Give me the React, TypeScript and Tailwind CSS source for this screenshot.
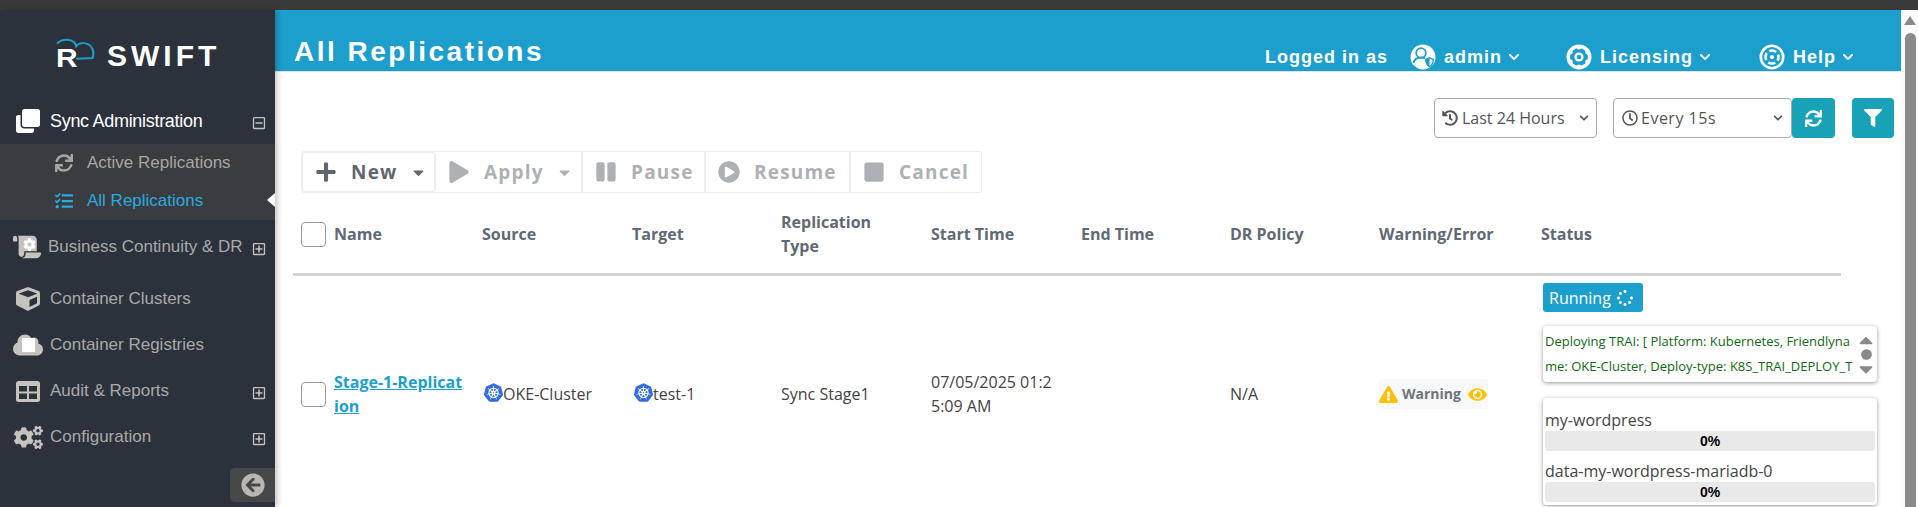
import { FaChevronDown, FaClone, FaCog, FaCogs, FaCube, FaCloud, FaEye, FaExclamationTriangle, FaFilter, FaHistory, FaPause, FaPlay, FaPlayCircle, FaPlus, FaRegClock, FaRegMinusSquare, FaRegPlusSquare, FaScroll, FaStop, FaSync, FaTasks, FaArrowCircleLeft, FaCaretDown, FaCaretUp, FaCircle, FaSpinner } from "react-icons/fa";
import { SiKubernetes } from "react-icons/si";

const columns = "grid grid-cols-[181px_150px_149px_150px_150px_149px_149px_162px_308px]";

function SideItem({ icon, label, toggle, indent }: { icon: React.ReactNode; label: string; toggle?: boolean; indent?: string }) {
  return (
    <div className="flex h-[46px] items-center text-[#a9a9a9]">
      <div className={`flex shrink-0 justify-center pl-[6px] text-[#c6c2be] ${indent ?? "w-[50px]"}`}>{icon}</div>
      <span className="flex-1 whitespace-nowrap">{label}</span>
      {toggle && <FaRegPlusSquare className="mr-[9px] mt-[3px] text-[14px] text-[#c6c2be]" />}
    </div>
  );
}

function TopLink({ icon, label }: { icon: React.ReactNode; label: string }) {
  return (
    <div className="flex items-center gap-[8px]">
      {icon}
      <span className="tracking-[1px]">{label}</span>
      <FaChevronDown className="-ml-[2px] text-[12px]" />
    </div>
  );
}

function ToolButton({ icon, label, caret, active, className }: { icon: React.ReactNode; label: string; caret?: boolean; active?: boolean; className: string }) {
  return (
    <div className={`flex items-center border-r-2 border-[#eeeeee] pl-[12px] last:border-r-0 ${active ? "text-[#5f6670]" : "text-[#adb1b4]"} ${className}`}>
      <span className="flex w-[36px] shrink-0 text-[22px]">{icon}</span>
      <span className="text-[19px] font-bold tracking-[1.2px]">{label}</span>
      {caret && <FaCaretDown className="ml-[12px] text-[17px]" />}
    </div>
  );
}

function Volume({ name }: { name: string }) {
  return (
    <div className="mb-[9px]">
      <div className="flex h-[22px] items-center text-[#444444]">{name}</div>
      <div className="flex h-[20px] items-center justify-center rounded-[3px] bg-[#e9e9e9] text-[14px] font-bold leading-none text-black [font-family:'Liberation_Sans',sans-serif]">
        0%
      </div>
    </div>
  );
}

export default function App() {
  return (
    <div className="flex h-screen flex-col overflow-hidden bg-white [font-family:'Open_Sans',sans-serif]">
      <div className="h-[10px] shrink-0 bg-[#3a3a3a]" />
      <div className="flex min-h-0 flex-1">
        {/* Sidebar */}
        <aside className="z-10 flex w-[275px] shrink-0 flex-col bg-[#2b323b] text-[17px] shadow-[2px_0_6px_rgba(0,0,0,0.25)] [font-family:'Liberation_Sans',sans-serif]">
          <div className="flex h-[90px] shrink-0 items-start pl-[56px] pt-[33px] text-white">
            <div className="relative flex items-end">
              <span className="mt-[4px] w-[51px] origin-left scale-x-[1.2] text-[25px] font-bold leading-[22px]">R</span>
              <svg viewBox="45 25 125 70" className="absolute -left-[1px] -top-[5px] h-[23px] w-[42px]" fill="none" stroke="#1d9fce" strokeWidth="6">
                <path d="M50 42 C62 28 88 26 102 38 C106 42 107 46 108 50 C114 40 132 38 144 44 C150 47 156 53 158 58 C161 68 161 78 158 86 L108 88" />
              </svg>
              <span className="text-[30px] font-bold leading-[26px] tracking-[4px]">SWIFT</span>
            </div>
          </div>
          <div className="flex h-[44px] shrink-0 items-center pb-[2px] text-white">
            <div className="flex w-[50px] shrink-0 justify-center pl-[6px] text-[24px]"><FaClone /></div>
            <span className="flex-1 whitespace-nowrap text-[18px] tracking-[-0.3px]">Sync Administration</span>
            <FaRegMinusSquare className="mr-[9px] mt-[3px] text-[14px] text-[#c6c2be]" />
          </div>
          <div className="shrink-0 bg-[#3a3d40]">
            <div className="flex h-[38px] items-center text-[#a9a5a1]">
              <div className="flex w-[87px] shrink-0 justify-center pl-[40px] text-[18px]"><FaSync /></div>
              <span>Active Replications</span>
            </div>
            <div className="relative flex h-[38px] items-center text-[#2ba8e0]">
              <div className="flex w-[87px] shrink-0 justify-center pl-[40px] text-[18px]"><FaTasks /></div>
              <span>All Replications</span>
              <div className="absolute right-0 top-[11px] h-0 w-0 border-y-[7px] border-r-[8px] border-y-transparent border-r-white" />
            </div>
          </div>
          <div className="mt-[4px]">
            <SideItem
              indent="w-[48px]"
              icon={
                <span className="relative flex text-[28px]">
                  <FaScroll />
                  <FaCog className="absolute left-[10px] top-[5px] text-[13px] text-white" />
                </span>
              }
              label="Business Continuity & DR"
              toggle
            />
          </div>
          <div className="mt-[6px]">
            <SideItem icon={<FaCube className="text-[24px]" />} label="Container Clusters" />
            <SideItem
              icon={
                <span className="relative flex text-[30px]">
                  <FaCloud />
                  <span className="absolute left-[9px] top-[8px] h-[14px] w-[13px] bg-white" />
                </span>
              }
              label="Container Registries"
            />
            <SideItem
              icon={
                <svg viewBox="0 0 24 21" className="h-[21px] w-[24px]">
                  <rect width="24" height="21" rx="2.500" fill="#c6c2be" />
                  <rect x="3" y="5" width="8" height="5.500" fill="#2b323b" />
                  <rect x="13" y="5" width="8" height="5.500" fill="#2b323b" />
                  <rect x="3" y="12.500" width="8" height="5.500" fill="#2b323b" />
                  <rect x="13" y="12.500" width="8" height="5.500" fill="#2b323b" />
                </svg>
              }
              label="Audit & Reports"
              toggle
            />
            <SideItem icon={<FaCogs className="text-[29px]" />} label="Configuration" toggle />
          </div>
          <div className="mb-[5px] mt-auto flex h-[34px] w-[45px] items-center justify-center self-end rounded-l-[5px] bg-[#454749] text-[24px] text-[#b9b5b1]">
            <FaArrowCircleLeft />
          </div>
        </aside>

        {/* Main */}
        <main className="flex min-w-0 flex-1 flex-col">
          <header className="flex h-[62px] shrink-0 items-end justify-between border-b border-[#dfe6ea] bg-[#1d9fce] pl-[19px] pr-[47px] font-bold text-white [font-family:'Liberation_Sans',sans-serif]">
            <h1 className="text-[28px] leading-[38px] tracking-[2.5px]">All Replications</h1>
            <div className="flex h-[28px] items-center text-[18px]">
              <span className="mr-[22px] tracking-[1px]">Logged in as</span>
              <div className="mr-[46px]">
                <TopLink
                  icon={
                    <svg viewBox="0 0 26 26" className="h-[26px] w-[26px]">
                      <circle cx="13" cy="13" r="12.500" fill="white" />
                      <circle cx="11" cy="9" r="4.800" fill="white" stroke="#1d9fce" strokeWidth="1.800" />
                      <path d="M3.500 19c.8-3.800 3.500-5.500 7.500-5.500 1.700 0 3 .3 4 .8" fill="none" stroke="#1d9fce" strokeWidth="1.800" />
                      <path d="M15 15l4.500-2 4.500 2c0 4-1.500 7-4.500 8.500-3-1.500-4.500-4.500-4.500-8.500z" fill="#1d9fce" />
                      <path d="M19.500 14.500l3 1.300c0 2.800-1 5-3 6.200z" fill="white" />
                    </svg>
                  }
                  label="admin"
                />
              </div>
              <div className="mr-[48px]">
                <TopLink
                  icon={
                    <svg viewBox="0 0 26 26" className="h-[26px] w-[26px]">
                      <circle cx="13" cy="13" r="12.500" fill="white" />
                      <circle cx="13" cy="13" r="9" fill="#1d9fce" />
                      <g fill="white">
                        <circle cx="13" cy="3.200" r="2.300" />
                        <circle cx="21.500" cy="8.100" r="2.300" />
                        <circle cx="21.500" cy="17.900" r="2.300" />
                        <circle cx="13" cy="22.800" r="2.300" />
                        <circle cx="4.500" cy="17.900" r="2.300" />
                        <circle cx="4.500" cy="8.100" r="2.300" />
                        <circle cx="13" cy="13" r="4.600" />
                      </g>
                      <circle cx="13" cy="13" r="2.200" fill="#1d9fce" />
                    </svg>
                  }
                  label="Licensing"
                />
              </div>
              <TopLink
                icon={
                  <svg viewBox="0 0 26 26" className="h-[26px] w-[26px]" fill="none" stroke="white">
                    <circle cx="13" cy="13" r="11.200" strokeWidth="2.600" />
                    <circle cx="13" cy="13" r="6.500" strokeWidth="2.600" strokeDasharray="7.200 3" strokeDashoffset="3.600" />
                    <circle cx="13" cy="13" r="2" fill="white" strokeWidth="0" />
                  </svg>
                }
                label="Help"
              />
            </div>
          </header>

          <div className="min-h-0 flex-1 pl-[18px] pr-[7px]">
            {/* Filters */}
            <div className="mt-[26px] flex h-[40px] justify-end text-[16px] text-[#555555]">
              <div className="flex w-[163px] items-center justify-between rounded-[4px] border border-[#aaaaaa] px-[7px]">
                <span className="flex items-center gap-[4px] whitespace-nowrap"><FaHistory className="text-[16px]" />Last 24 Hours</span>
                <FaChevronDown className="text-[10px]" />
              </div>
              <div className="ml-[16px] flex w-[179px] items-center justify-between rounded-[4px] border border-[#aaaaaa] px-[8px]">
                <span className="flex items-center gap-[3px] whitespace-nowrap tracking-[0.5px]"><FaRegClock className="text-[16px]" />Every 15s</span>
                <FaChevronDown className="text-[10px]" />
              </div>
              <div className="flex w-[43px] items-center justify-center rounded-[4px] bg-[#17a2b8] text-[17px] text-white"><FaSync /></div>
              <div className="ml-[17px] flex w-[42px] items-center justify-center rounded-[4px] bg-[#17a2b8] text-[18px] text-white"><FaFilter /></div>
            </div>

            {/* Toolbar */}
            <div className="ml-[8px] mt-[13px] flex h-[42px] w-[681px] rounded-[3px] border border-[#eeeeee]">
              <ToolButton className="w-[134px] rounded-[3px] border border-[#e4e4e4]" active icon={<FaPlus />} label="New" caret />
              <ToolButton className="w-[147px]" icon={<FaPlay />} label="Apply" caret />
              <ToolButton className="w-[123px]" icon={<FaPause />} label="Pause" />
              <ToolButton className="w-[145px]" icon={<FaPlayCircle />} label="Resume" />
              <ToolButton className="w-[130px]" icon={<FaStop />} label="Cancel" />
            </div>

            {/* Table */}
            <div className="mt-[12px] w-[1548px] text-[16px]">
              <div className={`${columns} h-[71px] items-center border-b-[3px] border-[#d2d2d2] pb-[10px] font-bold leading-[24px] text-[#5f6a75]`}>
                <div className="flex items-center pl-[8px]">
                  <div className="mr-[8px] h-[25px] w-[25px] rounded-[4px] border border-[#999999]" />
                  Name
                </div>
                <div className="pl-[8px]">Source</div>
                <div className="pl-[8px]">Target</div>
                <div className="pl-[8px]">Replication<br />Type</div>
                <div className="pl-[8px]">Start Time</div>
                <div className="pl-[8px]">End Time</div>
                <div className="pl-[8px]">DR Policy</div>
                <div className="pl-[8px]">Warning/Error</div>
                <div className="pl-[8px]">Status</div>
              </div>

              <div className={`${columns} items-center leading-[24px] text-[#444444]`}>
                <div className="flex items-center pl-[8px]">
                  <div className="mr-[8px] h-[25px] w-[25px] shrink-0 rounded-[4px] border border-[#999999]" />
                  <a className="w-[132px] break-all font-bold text-[#1d9fce] underline">Stage-1-Replication</a>
                </div>
                <div className="flex items-center pl-[10px]">
                  <SiKubernetes className="-mt-[3px] text-[19px] text-[#326ce5]" />OKE-Cluster
                </div>
                <div className="flex items-center pl-[10px]">
                  <SiKubernetes className="-mt-[3px] text-[19px] text-[#326ce5]" />test-1
                </div>
                <div className="pl-[8px]">Sync Stage1</div>
                <div className="break-all pl-[8px] pr-[18px]">07/05/2025 01:25:09 AM</div>
                <div />
                <div className="pl-[8px]">N/A</div>
                <div className="pl-[8px]">
                  <div className="flex h-[30px] w-[109px] items-center rounded-[3px] bg-[#f8f9fa] text-[14px] font-bold text-[#6c757d]">
                    <FaExclamationTriangle className="mr-[4px] text-[19px] text-[#ffc107]" />
                    Warning
                    <FaEye className="ml-[7px] text-[19px] text-[#ffc107]" />
                  </div>
                </div>
                <div className="pb-[7px] pl-[10px] pt-[7px]">
                  <div className="flex h-[29px] w-[100px] items-center gap-[6px] rounded-[3px] bg-[#1d9fce] pl-[6px] text-white">
                    Running
                    <FaSpinner className="text-[16px]" />
                  </div>
                  <div className="mt-[14px] flex h-[56px] w-[334px] rounded-[4px] bg-white pl-[2px] shadow-[0_1px_4px_rgba(0,0,0,0.4)]">
                    <div className="w-[312px] break-all py-[3px] text-[13px] leading-[25px] text-[#0f6b0f]">
                      Deploying TRAI: [ Platform: Kubernetes, Friendlyname: OKE-Cluster, Deploy-type: K8S_TRAI_DEPLOY_T
                    </div>
                    <div className="flex flex-1 flex-col items-center justify-center text-[#8a8a8a]">
                      <FaCaretUp className="-my-[2px] text-[22px]" />
                      <FaCircle className="text-[11px]" />
                      <FaCaretDown className="-my-[2px] text-[22px]" />
                    </div>
                  </div>
                  <div className="mt-[16px] h-[107px] w-[334px] rounded-[4px] bg-white px-[2px] pt-[11px] shadow-[0_1px_4px_rgba(0,0,0,0.4)]">
                    <Volume name="my-wordpress" />
                    <Volume name="data-my-wordpress-mariadb-0" />
                  </div>
                </div>
              </div>
            </div>
          </div>
        </main>

        {/* Page scrollbar */}
        <div className="flex w-[17px] shrink-0 flex-col items-center bg-[#fafafa]">
          <div className="ml-[1px] mt-[6px] h-0 w-0 border-x-[6px] border-b-[9px] border-x-transparent border-b-[#8a8a8a]" />
          <div className="ml-[1px] mt-[8px] w-[11px] flex-1 rounded-t-[6px] bg-[#8a8a8a]" />
        </div>
      </div>
    </div>
  );
}
